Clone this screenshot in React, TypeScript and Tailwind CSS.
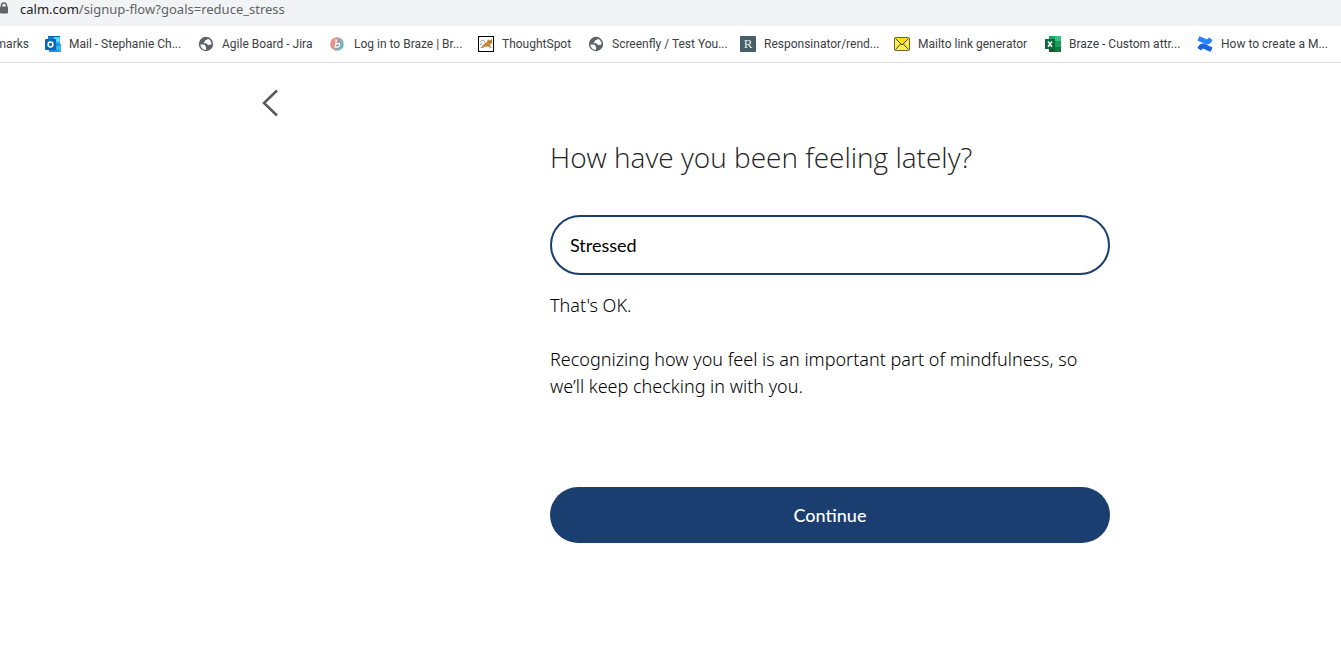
import type { ReactNode } from 'react';

interface Bookmark {
  label: string;
  width: string;
  icon: ReactNode;
}

function GlobeIcon() {
  return (
    <svg viewBox="0 0 16 16" className="size-4 shrink-0" aria-hidden="true">
      <circle cx="8" cy="8" r="7.2" fill="#5f6368" />
      <path d="M2.4 8.4c1.800 0 3.400-.2 4.400.6.8.7.2 1.600 1.200 1.900v2.900c-3 .1-5.500-2.300-5.600-5.400z" fill="#fff" />
      <path d="M9.6 2.700c-.2 1-.8 1.300-1.700 1.300-.9.100-.9.800-.9 1.500-.1.800-1.400.4-1.300 1.200.1.700 1.200.5 2.200.5 1.500 0 1.300 1.600 2.400 1.700 1.100.1 1.600-.6 3.200-.5.300-2.700-1.300-4.900-3.900-5.700z" fill="#fff" />
    </svg>
  );
}

function OutlookIcon() {
  return (
    <svg viewBox="0 0 16 16" className="size-4 shrink-0" aria-hidden="true">
      <path d="M3 0h12v9H3z" fill="#28a8ea" />
      <path d="M3 0h12v1H3z" fill="#0a5ca8" />
      <path d="M9 1h6v5H9z" fill="#50d9ff" />
      <path d="M3 1h6v4H3z" fill="#0f83d4" />
      <path d="M3 8h13v8H4z" fill="#1490df" />
      <path d="M16 8v8l-7-4z" fill="#33b5f2" />
      <rect y="3" width="11" height="11" rx="1" fill="#0f64b8" />
      <circle cx="5.5" cy="8.5" r="2.4" fill="none" stroke="#fff" strokeWidth="1.5" />
    </svg>
  );
}

function BrazeIcon() {
  return (
    <svg viewBox="0 0 16 16" className="size-4 shrink-0" aria-hidden="true">
      <defs>
        <linearGradient id="braze" x1="0" x2="1" y1="0.3" y2="0.7">
          <stop offset="0.2" stopColor="#f28b85" />
          <stop offset="0.9" stopColor="#63bac4" />
        </linearGradient>
      </defs>
      <circle cx="7" cy="8" r="6.8" fill="url(#braze)" />
      <path d="M5 4.200h1.400l-1.400 6.800c2.600.6 4.700-.2 4.700-2.200 0-1.700-2.300-1.900-4-.2" fill="none" stroke="#fff" strokeWidth="1.2" />
    </svg>
  );
}

function ThoughtSpotIcon() {
  return (
    <svg viewBox="0 0 16 16" className="size-4 shrink-0" aria-hidden="true">
      <rect x="0.5" y="0.5" width="15" height="15" fill="#fff" stroke="#000" />
      <path d="M2 12l3-2 2-3 2-1 1-3 1.500 1.500L14 3v4l-2 1.500.5 2 2 1.500-3-.5-2-1-3 .5-2 1z" fill="#c68b38" />
      <path d="M2.500 6c1.500-3 4-2 4 .5M2 8.500l2-1M4 10l2-1" fill="none" stroke="#88888c" />
      <path d="M11 5.500h1M12.500 6.500h1" stroke="#8a5a1e" />
    </svg>
  );
}

function ResponsinatorIcon() {
  return (
    <svg viewBox="0 0 16 16" className="size-4 shrink-0" aria-hidden="true">
      <rect width="16" height="16" rx="1" fill="#465f66" />
      <text x="8" y="12" textAnchor="middle" fontSize="13" fontFamily="Liberation Serif, serif" fill="#e8eeee">R</text>
    </svg>
  );
}

function EnvelopeIcon() {
  return (
    <svg viewBox="0 0 16 16" className="size-4 shrink-0" aria-hidden="true">
      <rect x="0.5" y="1.5" width="15" height="13" rx="1" fill="#fff04d" stroke="#66613a" />
      <path d="M1 2h14L8 9z" fill="#ffdc18" />
      <path d="M1.500 2.500L8 9l6.500-6.500M1.500 13.500L6.500 8M14.500 13.500L9.500 8" fill="none" stroke="#45401b" />
    </svg>
  );
}

function ExcelIcon() {
  return (
    <svg viewBox="0 0 16 16" className="size-4 shrink-0" aria-hidden="true">
      <path d="M4 0h6v5H4z" fill="#21a366" />
      <path d="M10 0h6v5h-6z" fill="#33c481" />
      <path d="M4 5h6v6H4z" fill="#107c41" />
      <path d="M10 5h6v6h-6z" fill="#1b9a5c" />
      <path d="M4 11h12v5H4z" fill="#185c37" />
      <path d="M10 11h6v5h-6z" fill="#107c41" />
      <rect y="3" width="10" height="10" rx="0.5" fill="#0c6b38" />
      <path d="M3 5.500l4 5.200M7 5.500l-4 5.200" stroke="#fff" strokeWidth="1.5" />
    </svg>
  );
}

function ConfluenceIcon() {
  return (
    <svg viewBox="0 0 16 16" className="size-4 shrink-0" aria-hidden="true">
      <path d="M.4 12c1-1.900 2.500-4.400 5.200-4.400 2.800 0 5.400 2.400 9.900 3.700l-1.700 4.500C9 14.500 7.200 12.600 6 12.800c-.9.200-1.300 1-1.900 1.800z" fill="#1b66e0" />
      <path d="M15.600 4c-1 1.900-2.500 4.400-5.200 4.400C7.600 8.400 5 6 .5 4.700L2.200.2C7 1.500 8.800 3.400 10 3.200c.9-.2 1.300-1 1.900-1.800z" fill="#2684ff" />
    </svg>
  );
}

const bookmarks: Bookmark[] = [
  { label: 'Mail - Stephanie Ch...', width: 'w-[153px]', icon: <OutlookIcon /> },
  { label: 'Agile Board - Jira', width: 'w-[132px]', icon: <GlobeIcon /> },
  { label: 'Log in to Braze | Br...', width: 'w-[148px]', icon: <BrazeIcon /> },
  { label: 'ThoughtSpot', width: 'w-[110px]', icon: <ThoughtSpotIcon /> },
  { label: 'Screenfly / Test You...', width: 'w-[152px]', icon: <GlobeIcon /> },
  { label: 'Responsinator/rend...', width: 'w-[154px]', icon: <ResponsinatorIcon /> },
  { label: 'Mailto link generator', width: 'w-[151px]', icon: <EnvelopeIcon /> },
  { label: 'Braze - Custom attr...', width: 'w-[152px]', icon: <ExcelIcon /> },
  { label: 'How to create a M...', width: 'w-[144px]', icon: <ConfluenceIcon /> },
];

function BrowserBar() {
  return (
    <header className="overflow-hidden border-b border-[#dadce0]">
      <div className="flex h-[26px] items-start bg-[#f1f3f4]">
        <svg viewBox="0 0 9 12" className="mt-[2px] h-3 w-[9px] shrink-0" aria-hidden="true">
          <path d="M1.500 5V3.500a2.500 2.500 0 0 1 5 0V5" fill="none" stroke="#5f6368" strokeWidth="1.5" />
          <rect y="4.5" width="8" height="7" rx="1" fill="#5f6368" />
        </svg>
        <p className="ml-[11px] font-['Noto_Sans',sans-serif] text-[13px] leading-[18px] text-[#5f6368]">
          <span className="text-[#202124]">calm.com</span>/signup-flow?goals=reduce_stress
        </p>
      </div>
      <nav className="flex h-9 items-center font-['Roboto',sans-serif] text-xs whitespace-nowrap text-[#3c4043]">
        <a href="#" className="flex w-[45px] shrink-0 justify-end pr-4">
          marks
        </a>
        {bookmarks.map((b) => (
          <a key={b.label} href="#" className={`flex shrink-0 items-center gap-2 ${b.width}`}>
            {b.icon}
            <span>{b.label}</span>
          </a>
        ))}
      </nav>
    </header>
  );
}

export default function App() {
  return (
    <div className="min-h-screen bg-white">
      <BrowserBar />
      <main className="flex items-start pl-[262px]">
        <button type="button" aria-label="Back" className="mt-[26px] w-[288px] shrink-0">
          <svg viewBox="0 0 18 28" className="h-7 w-[18px]" fill="none" stroke="#595959" strokeWidth="2.5">
            <path d="M15 1.500L2 14l13 12.500" />
          </svg>
        </button>
        <form className="w-full max-w-[560px] pt-[74px] font-['Noto_Sans',sans-serif] text-lg leading-[27px] text-black">
          <label
            htmlFor="feeling"
            className="block font-['Open_Sans',sans-serif] text-[28px] leading-10 font-light text-[#222222]"
          >
            How have you been feeling lately?
          </label>
          <input
            id="feeling"
            type="text"
            defaultValue="Stressed"
            className="mt-[38px] block h-[60px] w-full rounded-full border-2 border-[#1a3e6f] px-[18px] font-['Lato',sans-serif] outline-none"
          />
          <p className="mt-[17px] font-light">That&apos;s OK.</p>
          <p className="mt-[27px] font-light">
            Recognizing how you feel is an important part of mindfulness, so we’ll keep checking in with you.
          </p>
          <button
            type="button"
            className="mt-[87px] block h-14 w-full rounded-full bg-[#1a3e6f] font-['Lato',sans-serif] font-medium text-white"
          >
            Continue
          </button>
        </form>
      </main>
    </div>
  );
}
